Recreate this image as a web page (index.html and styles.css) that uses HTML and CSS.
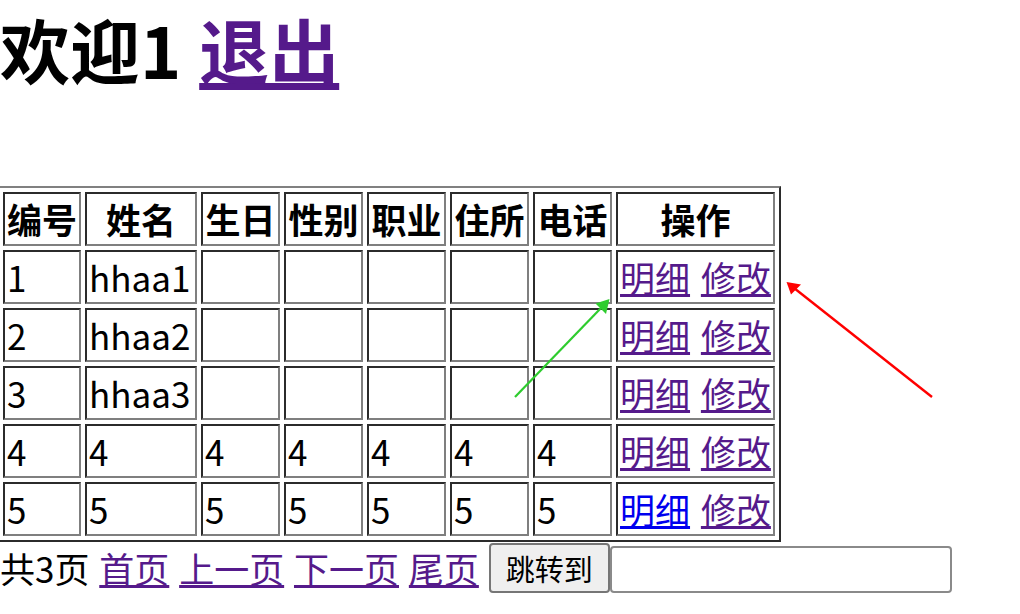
FILE: index.html
```html
<!DOCTYPE html>
<html lang="zh-CN">
<head>
<meta charset="utf-8">
<title>用户列表</title>
<link rel="stylesheet" href="styles.css">
</head>
<body>
<div class="page">
  <h1 class="title">欢迎1 <a href="#" class="lnk">退出</a></h1>
  <table class="grid">
    <tr>
      <th class="c-id">编号</th>
      <th class="c-name">姓名</th>
      <th class="c-s">生日</th>
      <th class="c-s">性别</th>
      <th class="c-s">职业</th>
      <th class="c-s">住所</th>
      <th class="c-s">电话</th>
      <th class="c-ops">操作</th>
    </tr>
    <tr><td>1</td><td>hhaa1</td><td></td><td></td><td></td><td></td><td></td><td class="ops"><a href="#" class="lnk">明细</a> <a href="#" class="lnk">修改</a></td></tr>
    <tr><td>2</td><td>hhaa2</td><td></td><td></td><td></td><td></td><td></td><td class="ops"><a href="#" class="lnk">明细</a> <a href="#" class="lnk">修改</a></td></tr>
    <tr><td>3</td><td>hhaa3</td><td></td><td></td><td></td><td></td><td></td><td class="ops"><a href="#" class="lnk">明细</a> <a href="#" class="lnk">修改</a></td></tr>
    <tr><td>4</td><td>4</td><td>4</td><td>4</td><td>4</td><td>4</td><td>4</td><td class="ops"><a href="#" class="lnk">明细</a> <a href="#" class="lnk">修改</a></td></tr>
    <tr><td>5</td><td>5</td><td>5</td><td>5</td><td>5</td><td>5</td><td>5</td><td class="ops"><a href="#" class="lnk-new">明细</a> <a href="#" class="lnk">修改</a></td></tr>
  </table>
  <div class="pager">共3页 <a href="#" class="lnk">首页</a> <a href="#" class="lnk">上一页</a> <a href="#" class="lnk">下一页</a> <a href="#" class="lnk">尾页</a> <button class="jump" type="button">跳转到</button><input class="page-input" type="text"></div>
</div>
<svg class="arrows" width="1020" height="614" viewBox="0 0 1020 614" xmlns="http://www.w3.org/2000/svg">
  <line x1="515" y1="397" x2="601" y2="308" stroke="#2ecc2e" stroke-width="2.2"/>
  <polygon points="609.5,299 595.5,303.5 606,314" fill="#2ecc2e"/>
  <line x1="932" y1="397" x2="794" y2="288" stroke="#ff0000" stroke-width="2.4"/>
  <polygon points="786.5,282 801,284.5 791,294.5" fill="#ff0000"/>
</svg>
</body>
</html>
```

FILE: styles.css
```css
html, body {
  margin: 0;
  padding: 0;
  background: #ffffff;
}

body {
  font-family: "Noto Sans CJK SC", "Noto Sans", sans-serif;
  font-size: 35px;
  color: #000000;
}

.lnk {
  color: #551a8b;
  text-decoration: underline;
}

.lnk-new {
  color: #0000ee;
  text-decoration: underline;
}

.title {
  margin: 0 0 88px 0;
  font-size: 70px;
  font-weight: 700;
  line-height: 98px;
  word-spacing: 2px;
  white-space: nowrap;
}

.grid {
  margin-left: -3px;
  border-collapse: separate;
  border-spacing: 4px;
  border-width: 2px;
  border-style: solid;
  border-color: #808080 #2b2b2b #2b2b2b #808080;
}

.grid th,
.grid td {
  border-width: 2px;
  border-style: solid;
  border-color: #2b2b2b #7f7f7f #7f7f7f #2b2b2b;
  padding: 2px;
  height: 46px;
  line-height: 46px;
  white-space: nowrap;
  vertical-align: middle;
}

.grid th {
  font-weight: 700;
  text-align: center;
}

.grid td {
  text-align: left;
}

.c-id { width: 70px; }
.c-name { width: 104px; }
.c-s { width: 71px; }
.c-ops { width: 151px; }

.ops {
  word-spacing: 3px;
}

.pager {
  line-height: 51px;
  word-spacing: 2px;
  white-space: nowrap;
}

.jump {
  box-sizing: border-box;
  width: 121px;
  height: 50px;
  margin: 0;
  padding: 2px 10px;
  font-family: "Noto Sans CJK SC", "Noto Sans", sans-serif;
  font-size: 29px;
  line-height: 42px;
  color: #000000;
  background: #efefef;
  border: 2px solid #767676;
  border-radius: 4px;
  vertical-align: bottom;
}

.page-input {
  box-sizing: border-box;
  width: 342px;
  height: 47px;
  margin: 0;
  padding: 2px 4px;
  font-family: "Noto Sans CJK SC", "Noto Sans", sans-serif;
  font-size: 29px;
  border: 2px solid #8a8a8a;
  border-radius: 4px;
  background: #ffffff;
  vertical-align: bottom;
}

.arrows {
  position: absolute;
  top: 0;
  left: 0;
  pointer-events: none;
}
```
